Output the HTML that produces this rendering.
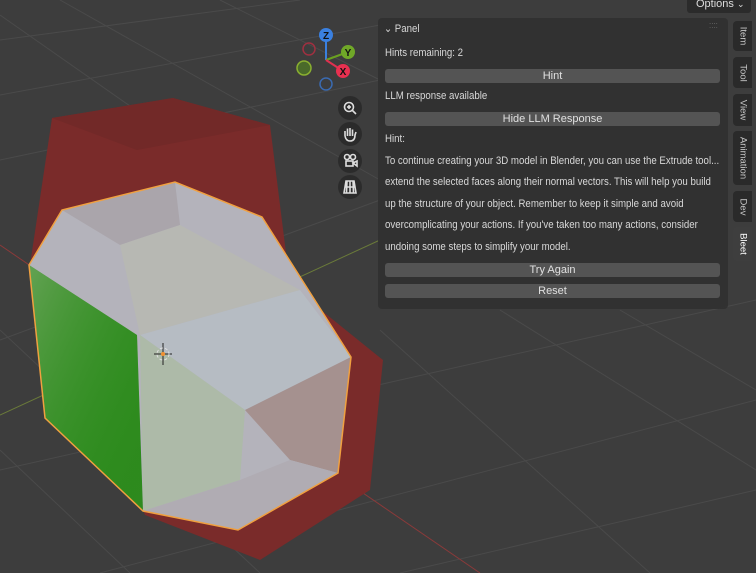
<!DOCTYPE html>
<html><head><meta charset="utf-8"><style>
*{margin:0;padding:0;box-sizing:border-box}
body{width:756px;height:573px;overflow:hidden;background:#3d3d3d;font-family:"Liberation Sans","DejaVu Sans",sans-serif;position:relative}
svg{position:absolute;left:0;top:0}
.panel{position:absolute;left:378px;top:18px;width:350px;height:291px;background:rgba(48,48,48,.95);border-radius:4px;color:#d8d8d8;font-size:11px}
.t{position:absolute;left:7px;white-space:nowrap;transform:scaleX(.88);transform-origin:left top}
.b{position:absolute;left:7px;width:335px;height:14px;background:#545454;border-radius:3px;text-align:center;line-height:14px;color:#e0e0e0}
.tab{position:absolute;left:733px;width:19px;background:#2a2a2a;border-radius:4px 0 0 4px;color:#c8c8c8;font-size:9.5px}
.tab span{position:absolute;left:50%;top:50%;transform:translate(-50%,-50%) rotate(90deg);white-space:nowrap}
.opt{position:absolute;left:687px;top:-3px;width:64px;height:16px;background:#2b2b2b;border-radius:3px;color:#ddd;font-size:11px;padding-left:9px;line-height:15px}
</style></head><body>
<svg width="756" height="573" viewBox="0 0 756 573">
<g stroke="#4a4a4a" stroke-width="1" fill="none">
<line x1="0" y1="40" x2="300" y2="0"/><line x1="0" y1="95" x2="380" y2="25"/><line x1="0" y1="160" x2="380" y2="80"/>
<line x1="0" y1="340" x2="380" y2="200"/><line x1="0" y1="470" x2="756" y2="300"/><line x1="100" y1="573" x2="756" y2="400"/><line x1="400" y1="573" x2="756" y2="490"/>
<line x1="0" y1="15" x2="150" y2="120"/><line x1="60" y1="0" x2="380" y2="180"/><line x1="220" y1="0" x2="380" y2="80"/>
<line x1="0" y1="330" x2="260" y2="573"/><line x1="0" y1="450" x2="130" y2="573"/><line x1="380" y1="330" x2="650" y2="573"/><line x1="500" y1="310" x2="756" y2="470"/>
<line x1="620" y1="310" x2="756" y2="390"/>
</g>
<line x1="0" y1="245" x2="480" y2="573" stroke="#8a3a3a" stroke-width="1"/>
<line x1="0" y1="415" x2="380" y2="240" stroke="#6a7a3a" stroke-width="1"/>
<polygon points="52,118 173,98 270,125 290,285 383,360 370,490 260,560 145,515 30,265" fill="#7a2b2a"/>
<polygon points="52,118 173,98 270,125 137,150" fill="#722928"/>
<polygon points="29,265 62,210 175,182 262,217 351,357 338,473 238,530 143,511 45,418" fill="#b4b3bb"/>
<polygon points="62,210 175,182 180,225 120,245" fill="#aaa5ab"/>
<polygon points="120,245 180,225 300,290 140,335" fill="#b7b8b3"/>
<polygon points="140,335 300,290 351,357 245,410" fill="#b6bcc3"/>
<polygon points="140,335 245,410 240,480 143,511" fill="#adbaa8"/>
<polygon points="245,410 351,357 338,473 290,460" fill="#a5918f"/>
<polygon points="143,511 240,480 290,460 338,473 238,530" fill="#b0acb3"/>
<polygon points="29,265 137,335 143,511 45,418" fill="#2e8a1e"/>
<polygon points="29,265 137,335 143,511 45,418" fill="url(#g)"/>
<defs><linearGradient id="g" x1="0" y1="0" x2="1" y2="1"><stop offset="0" stop-color="#7aac6a" stop-opacity=".7"/><stop offset="1" stop-color="#1a8a0a" stop-opacity="0"/></linearGradient></defs>
<polygon points="29,265 62,210 175,182 262,217 351,357 338,473 238,530 143,511 45,418" fill="none" stroke="#f0a040" stroke-width="1.5"/>
<g transform="translate(163,354)" stroke="#222" stroke-width="1"><line x1="-9" y1="0" x2="9" y2="0"/><line x1="0" y1="-11" x2="0" y2="11"/><circle r="6" fill="none" stroke="#e0e0e0" stroke-dasharray="3 2"/><circle r="2" fill="#f09030" stroke="none"/></g>
<line x1="326" y1="60" x2="326" y2="35" stroke="#3a80e0" stroke-width="2"/>
<line x1="326" y1="60" x2="348" y2="52" stroke="#6aa020" stroke-width="2"/>
<line x1="326" y1="60" x2="343" y2="71" stroke="#e03050" stroke-width="2"/>
<circle cx="309" cy="49" r="6" fill="none" stroke="#a03040" stroke-width="1.5"/>
<circle cx="304" cy="68" r="7" fill="#4a6a2a" stroke="#8ab030" stroke-width="1.5"/>
<circle cx="326" cy="84" r="6" fill="none" stroke="#3a6ab0" stroke-width="1.5"/>
<circle cx="326" cy="35" r="7" fill="#3a80e0"/><text x="326" y="39" font-size="10" font-weight="bold" text-anchor="middle" fill="#111" font-family="Liberation Sans">Z</text>
<circle cx="348" cy="52" r="7" fill="#70a828"/><text x="348" y="56" font-size="10" font-weight="bold" text-anchor="middle" fill="#111" font-family="Liberation Sans">Y</text>
<circle cx="343" cy="71" r="7" fill="#e83050"/><text x="343" y="75" font-size="10" font-weight="bold" text-anchor="middle" fill="#111" font-family="Liberation Sans">X</text>
<g fill="#2b2b2b"><circle cx="350" cy="108" r="12"/><circle cx="350" cy="134" r="12"/><circle cx="350" cy="161" r="12"/><circle cx="350" cy="187" r="12"/></g>
<g stroke="#ddd" stroke-width="1.6" fill="none">
<circle cx="349" cy="107" r="4.5"/><line x1="352" y1="110" x2="356" y2="114"/><line x1="347" y1="107" x2="351" y2="107"/><line x1="349" y1="105" x2="349" y2="109"/>
<path d="M345 136 L345 131 M347.5 136 L347.5 128.5 M350 136 L350 128 M352.5 136 L352.5 129.5 M345 136 Q346 141 350 141 Q355 141 355 135 L356 132"/>
<circle cx="347" cy="157" r="2.5"/><circle cx="353" cy="157" r="2.5"/><rect x="346" y="161" width="7" height="5"/><path d="M353 163 L357 161 L357 166 Z"/>
<path d="M344 193 L346 181 L354 181 L356 193 Z M345 187 L355 187 M350 181 L350 193 M347 181 L346.5 193 M353 181 L353.5 193"/>
</g>
</svg>
<div class="opt">Options <span style="font-size:9px">⌄</span></div>
<div class="panel">
<div class="t" style="top:4px;left:6px">⌄ Panel</div>
<div class="t" style="top:2px;left:331px;color:#666;font-size:9px">::::</div>
<div class="t" style="top:29px">Hints remaining: 2</div>
<div class="b" style="top:51px">Hint</div>
<div class="t" style="top:72px">LLM response available</div>
<div class="b" style="top:94px">Hide LLM Response</div>
<div class="t" style="top:115px">Hint:</div>
<div class="t" style="top:137px">To continue creating your 3D model in Blender, you can use the Extrude tool...</div>
<div class="t" style="top:158px">extend the selected faces along their normal vectors. This will help you build</div>
<div class="t" style="top:180px">up the structure of your object. Remember to keep it simple and avoid</div>
<div class="t" style="top:201px">overcomplicating your actions. If you've taken too many actions, consider</div>
<div class="t" style="top:223px">undoing some steps to simplify your model.</div>
<div class="b" style="top:245px">Try Again</div>
<div class="b" style="top:266px">Reset</div>
</div>
<div class="tab" style="top:21px;height:30px"><span>Item</span></div>
<div class="tab" style="top:57px;height:31px"><span>Tool</span></div>
<div class="tab" style="top:94px;height:32px"><span>View</span></div>
<div class="tab" style="top:131px;height:54px"><span>Animation</span></div>
<div class="tab" style="top:191px;height:31px"><span>Dev</span></div>
<div class="tab" style="top:227px;height:34px;background:#3e3e3e;color:#fff"><span>Bleet</span></div>
</body></html>
